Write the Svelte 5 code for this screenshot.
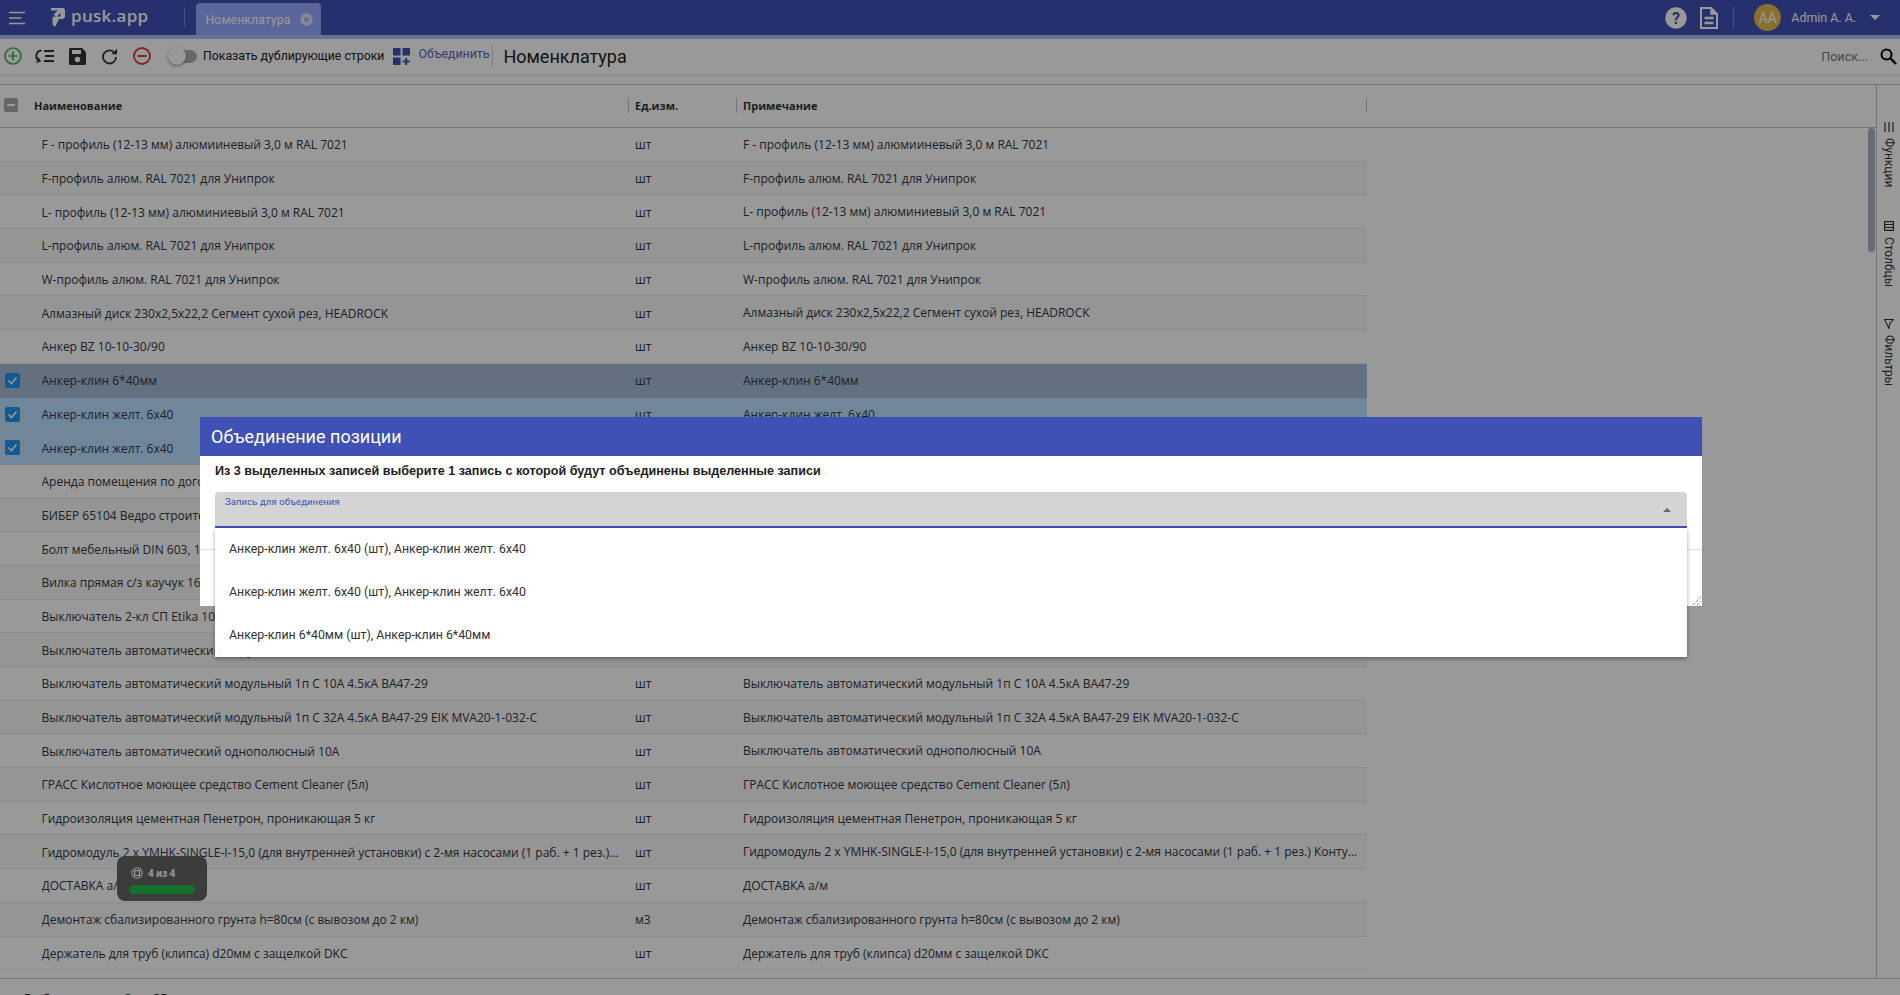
<script>
  const rows = [
    ['F - профиль (12-13 мм) алюмииневый 3,0 м RAL 7021', 'шт'],
    ['F-профиль алюм. RAL 7021 для Унипрок', 'шт'],
    ['L- профиль (12-13 мм) алюминиевый 3,0 м RAL 7021', 'шт'],
    ['L-профиль алюм. RAL 7021 для Унипрок', 'шт'],
    ['W-профиль алюм. RAL 7021 для Унипрок', 'шт'],
    ['Алмазный диск 230х2,5х22,2 Сегмент сухой рез, HEADROCK', 'шт'],
    ['Анкер BZ 10-10-30/90', 'шт'],
    ['Анкер-клин 6*40мм', 'шт', 'focus'],
    ['Анкер-клин желт. 6х40', 'шт', 'sel'],
    ['Анкер-клин желт. 6х40', 'шт', 'sel'],
    ['Аренда помещения по договору', 'шт'],
    ['БИБЕР 65104 Ведро строительное', 'шт'],
    ['Болт мебельный DIN 603, 10х100', 'шт'],
    ['Вилка прямая с/з каучук 16А', 'шт'],
    ['Выключатель 2-кл СП Etika 10А', 'шт'],
    ['Выключатель автоматический модульный 1п С 6А', 'шт'],
    ['Выключатель автоматический модульный 1п С 10А 4.5кА ВА47-29', 'шт'],
    ['Выключатель автоматический модульный 1п С 32А 4.5кА ВА47-29 EIK MVA20-1-032-С', 'шт'],
    ['Выключатель автоматический однополюсный 10А', 'шт'],
    ['ГРАСС Кислотное моющее средство Cement Cleaner (5л)', 'шт'],
    ['Гидроизоляция цементная Пенетрон, проникающая 5 кг', 'шт'],
    ['Гидромодуль 2 х YMHK-SINGLE-I-15,0 (для внутренней установки) с 2-мя насосами (1 раб. + 1 рез.) Контур охлаждения', 'шт'],
    ['ДОСТАВКА а/м', 'шт'],
    ['Демонтаж сбализированного грунта h=80см (с вывозом до 2 км)', 'м3'],
    ['Держатель для труб (клипса) d20мм с защелкой DKC', 'шт']
  ];
  const options = [
    'Анкер-клин желт. 6х40 (шт), Анкер-клин желт. 6х40',
    'Анкер-клин желт. 6х40 (шт), Анкер-клин желт. 6х40',
    'Анкер-клин 6*40мм (шт), Анкер-клин 6*40мм'
  ];
</script>

<div class="page">
  <header class="topbar">
    <div class="left">
      <svg class="burger" width="16" height="14" viewBox="0 0 16 14"><path d="M0 1.500h16M0 7h12.500M0 12.500h16" stroke="#fff" stroke-width="1.600" fill="none"/></svg>
      <div class="logo">
        <svg width="14" height="20" viewBox="0 0 14 20"><path d="M0 1h12.500l1.500 1.500V10l-2 2H8L4.500 19 3 19.500 1.500 17V10.500L3 9.500h6.500V5.800L5.500 10 2.500 7.500 7 3.500H0z" fill="#fff"/></svg>
        <span>pusk.app</span>
      </div>
      <div class="vline"></div>
      <div class="tab">
        <span>Номенклатура</span>
        <svg width="13" height="13" viewBox="0 0 13 13"><circle cx="6.500" cy="6.500" r="6.200" fill="#dfe4ff"/><path d="M4.500 4.500l4 4M8.500 4.500l-4 4" stroke="#8f9fe8" stroke-width="1.100"/></svg>
      </div>
    </div>
    <div class="right">
      <svg width="22" height="22" viewBox="0 0 22 22"><circle cx="11" cy="11" r="10.700" fill="#fff"/><text x="11" y="16.500" text-anchor="middle" class="q">?</text></svg>
      <svg class="doc" width="18" height="22" viewBox="0 0 18 22"><path d="M1 1h10l6 6v14H1z" fill="none" stroke="#fff" stroke-width="2"/><path d="M11 1v6h6" fill="#fff" stroke="#fff" stroke-width="1.500"/><path d="M4.500 11h9M4.500 16h9" stroke="#fff" stroke-width="2.600"/></svg>
      <div class="vline r"></div>
      <div class="avatar">AA</div>
      <span class="uname">Admin A. A.</span>
      <svg class="caret" width="10" height="5" viewBox="0 0 10 5"><path d="M0 0h10L5 5z" fill="#fff"/></svg>
    </div>
  </header>

  <div class="toolbar">
    <svg class="i1" width="18" height="18" viewBox="0 0 18 18"><circle cx="9" cy="9" r="8" fill="none" stroke="#43b853" stroke-width="1.700"/><path d="M9 4.500v9M4.500 9h9" stroke="#43b853" stroke-width="1.700"/></svg>
    <svg class="i2" width="19" height="14" viewBox="0 0 19 14"><path d="M6.500 1.500A5.500 5.500 0 0 0 4.500 12" fill="none" stroke="#333" stroke-width="1.800"/><path d="M2.500 8.500l2.500 3.500-3.500 1.500" fill="none" stroke="#333" stroke-width="1.400"/><path d="M9 2h10M10 7h9M9 12h10" stroke="#333" stroke-width="1.800"/></svg>
    <svg class="i3" width="17" height="17" viewBox="0 0 17 17"><path d="M0 1.500A1.500 1.500 0 0 1 1.500 0H13l4 4v11.500a1.500 1.500 0 0 1-1.500 1.500h-14A1.500 1.500 0 0 1 0 15.500z" fill="#333"/><rect x="3" y="2" width="9" height="4" fill="#ffffff"/><circle cx="8.500" cy="11.500" r="2.700" fill="#fff"/></svg>
    <svg class="i4" width="17" height="17" viewBox="0 0 17 17"><path d="M13.500 4.800A6.500 6.500 0 1 0 15 9" fill="none" stroke="#333" stroke-width="1.800"/><path d="M10.500 6.300H16V.8z" fill="#333"/></svg>
    <svg class="i5" width="18" height="18" viewBox="0 0 18 18"><circle cx="9" cy="9" r="8" fill="none" stroke="#e53535" stroke-width="1.800"/><path d="M4.500 9h9" stroke="#e53535" stroke-width="2"/></svg>
    <div class="toggle"><div class="thumb"></div></div>
    <span class="tlabel">Показать дублирующие строки</span>
    <svg class="i6" width="17" height="17" viewBox="0 0 17 17"><path d="M0 0h7.500v7.500H0zM9.500 0H17v7.500H9.500zM0 9.500h7.500V17H0z" fill="#3f51b5"/><path d="M13.200 10v7M9.700 13.500h7" stroke="#3f51b5" stroke-width="2"/></svg>
    <span class="merge">Объединить</span>
    <div class="tsep"></div>
    <span class="title">Номенклатура</span>
    <span class="search">Поиск...</span>
    <svg class="i7" width="17" height="17" viewBox="0 0 17 17"><circle cx="6.500" cy="6.500" r="5" fill="none" stroke="#000" stroke-width="2"/><path d="M10.200 10.200L16 16" stroke="#000" stroke-width="2.400"/></svg>
  </div>

  <div class="grid">
    <div class="main">
      <div class="ghead">
        <div class="c1h">
          <span class="hcheck"><i></i></span>
          <b>Наименование</b>
        </div>
        <div class="c2h"><b>Ед.изм.</b></div>
        <div class="c3h"><b>Примечание</b></div>
      </div>
      <div class="gbody">
        <div class="rows">
          {#each rows as r, i}
            <div class="row" class:alt={i % 2 === 1} class:focus={r[2] === 'focus'} class:sel={r[2] === 'sel'}>
              <div class="cell c1">
                {#if r[2]}
                  <svg class="rcheck" width="15" height="15" viewBox="0 0 15 15"><rect width="15" height="15" rx="2" fill="#2196f3"/><path d="M3.500 7.500l3 3 5-6" fill="none" stroke="#fff" stroke-width="1.600"/></svg>
                {/if}
                <span>{r[0]}</span>
              </div>
              <div class="cell c2">{r[1]}</div>
              <div class="cell c3">{r[0]}</div>
            </div>
          {/each}
        </div>
        <div class="thumbbar"></div>
      </div>
    </div>
    <aside class="side">
      <div class="stab s1">
        <svg width="10" height="10" viewBox="0 0 10 10"><path d="M0 1h10M0 5h10M0 9h10" stroke="#333" stroke-width="1.200" transform="rotate(90 5 5)"/></svg>
        <span>Функции</span>
      </div>
      <div class="stab s2">
        <svg width="10" height="10" viewBox="0 0 10 10"><rect x=".6" y=".6" width="8.800" height="8.800" fill="none" stroke="#333" stroke-width="1.200"/><path d="M.6 3.500h8.800M.6 6.500h8.800" stroke="#333" stroke-width="1.200"/></svg>
        <span>Столбцы</span>
      </div>
      <div class="stab s3">
        <svg width="10" height="10" viewBox="0 0 10 10"><path d="M.5.5h9L5.800 4.500 5 9.500z" fill="none" stroke="#333" stroke-width="1.100"/></svg>
        <span>Фильтры</span>
      </div>
    </aside>
  </div>

  <footer class="status"><b>Выбрано строк: 3 из 25</b></footer>

  <div class="toast">
    <div class="tline">
      <svg width="12" height="12" viewBox="0 0 12 12"><circle cx="6" cy="6" r="5" fill="none" stroke="#fff" stroke-width="1.600" stroke-dasharray="1.400 .6"/><rect x="3.600" y="3.600" width="4.800" height="4.800" fill="none" stroke="#fff" stroke-width="1.200"/></svg>
      <span>4 из 4</span>
    </div>
    <div class="bar"></div>
  </div>

  <div class="overlay"></div>

  <div class="dialog">
    <div class="dhead">Объединение позиции</div>
    <div class="dbody">
      <p class="lead">Из 3 выделенных записей выберите 1 запись с которой будут объединены выделенные записи</p>
      <div class="field">
        <label for="merge-select">Запись для объединения</label>
        <svg class="up" width="8" height="4" viewBox="0 0 8 4"><path d="M0 4h8L4 0z" fill="#666"/></svg>
        <div class="menu" id="merge-select">
          {#each options as o}
            <div class="opt">{o}</div>
          {/each}
        </div>
      </div>
    </div>
    <div class="dfoot"></div>
    <svg class="grip" width="8" height="8" viewBox="0 0 8 8"><path d="M0 8l8-8M4 8l4-4" stroke="#555" stroke-width="1" stroke-dasharray="1 1" fill="none"/></svg>
  </div>
</div>

<style>
  :global(body) { margin: 0; background: #fff; }
  .page {
    position: relative;
    width: 1900px;
    height: 995px;
    overflow: hidden;
    display: flex;
    flex-direction: column;
    background: #fff;
    font-family: "Open Sans", "Noto Sans", sans-serif;
    color: #2f3640;
  }
  .topbar {
    height: 35px;
    flex: none;
    border-bottom: 4px solid #aabbff;
    background: #3f51b5;
    display: flex;
    justify-content: space-between;
    align-items: stretch;
    font-family: Roboto, sans-serif;
    color: #fff;
  }
  .left, .right { display: flex; align-items: center; }
  .burger { margin-left: 9px; }
  .logo { display: flex; align-items: center; margin-left: 26px; gap: 6px; }
  .logo span { font-family: "Open Sans", sans-serif; font-weight: 600; font-size: 17px; letter-spacing: .3px; margin-top: -4px; }
  .logo svg { margin-top: -1px; }
  .vline { width: 1px; height: 20px; background: #7a88d0; margin-left: 36px; margin-top: -2px; }
  .tab {
    align-self: flex-end;
    margin-left: 11px;
    width: 125px;
    height: 32px;
    box-sizing: border-box;
    background: #96a8ff;
    border-radius: 4px 4px 0 0;
    display: flex;
    align-items: center;
    padding: 0 0 0 9px;
    gap: 10px;
    font-size: 12.400px;
  }
  .q { font: 700 16px Roboto, sans-serif; fill: #3f51b5; }
  .doc { margin-left: 13px; }
  .vline.r { margin: 0 0 0 15px; height: 22px; }
  .avatar {
    width: 27px; height: 27px; border-radius: 50%;
    background: #e6bb4c;
    margin-left: 20px;
    display: flex; align-items: center; justify-content: center;
    font-size: 14px;
  }
  .uname { margin-left: 10px; font-size: 12.400px; }
  .caret { margin: 0 20px 0 14px; }

  .toolbar {
    height: 36px;
    flex: none;
    border-bottom: 1px solid #e4e4e4;
    margin-bottom: 8px;
    display: flex;
    align-items: center;
    font-family: Roboto, sans-serif;
    color: #222;
  }
  .toolbar > * { position: relative; top: -1px; }
  .i1 { margin-left: 4px; }
  .i2 { margin-left: 13px; }
  .i3 { margin-left: 15px; }
  .i4 { margin-left: 15px; }
  .i5 { margin-left: 15px; }
  .toggle { width: 28px; height: 13px; margin-left: 18px; background: #b0b0b0; border-radius: 7px; }
  .thumb { position: absolute; left: -1px; top: -2.500px; width: 18px; height: 18px; background: #fff; border-radius: 50%; box-shadow: 0 1px 3px rgba(0,0,0,.45); }
  .tlabel { margin-left: 6px; font-size: 12.300px; }
  .i6 { margin-left: 9px; }
  .merge { margin-left: 8px; font-size: 12.350px; color: #5566c0; top: -3px; }
  .tsep { width: 1px; height: 22px; background: #d4d4d4; margin-left: 3px; }
  .title { margin-left: 10px; font-size: 18px; color: #222; }
  .search { margin-left: auto; font-size: 12.600px; color: #777; }
  .i7 { margin: 0 3px 0 12px; }

  .grid {
    height: 895px;
    flex: none;
    border-top: 1px solid #c4c2ca;
    border-bottom: 1px solid #c4c2ca;
    box-sizing: border-box;
    display: flex;
  }
  .main { width: 1876px; flex: none; display: flex; flex-direction: column; }
  .side { flex: 1; border-left: 1px solid #c4c2ca; display: flex; flex-direction: column; padding-top: 37px; }
  .ghead {
    height: 42px;
    flex: none;
    border-bottom: 1px solid #c4c2ca;
    display: grid;
    grid-template-columns: 628px 108px 631px;
    width: 100%;
    font-size: 11px;
    color: #333;
  }
  .ghead > div { display: flex; align-items: center; position: relative; top: -1px; }
  .ghead b { font-weight: 700; }
  .c1h { padding-left: 4px; }
  .c1h b { margin-left: 16px; }
  .c2h, .c3h { padding-left: 7px; }
  .c2h::before, .c3h::before, .c3h::after {
    content: ""; position: absolute; left: 0; top: 14px; height: 15px; width: 1px; background: #c4c2ca;
  }
  .c3h::after { left: auto; right: 0; }
  .c3h { width: 631px; box-sizing: border-box; }
  .hcheck { width: 14px; height: 14px; border-radius: 2px; background: #aaa; display: flex; align-items: center; justify-content: center; }
  .hcheck i { width: 8px; height: 2px; background: #fff; display: block; }

  .gbody { flex: 1; display: flex; justify-content: space-between; align-items: flex-start; min-height: 0; }
  .rows { width: 1367px; flex: none; }
  .row {
    height: 33.700px;
    box-sizing: border-box;
    border-bottom: 1px solid #e8e8e8;
    display: grid;
    grid-template-columns: 628px 108px 631px;
    font-size: 12px;
  }
  .row.alt { background: #f8f8f8; }
  .row.focus { background: #a5bbd4; border-bottom-color: #a5bbd4; }
  .row.sel { background: #bbe0ff; border-bottom-color: #c8dff0; }
  .cell { display: flex; align-items: center; min-width: 0; white-space: nowrap; padding-top: 1px; box-sizing: border-box; }
  .c1 { padding-left: 41.500px; padding-right: 8px; position: relative; }
  .c1 span { overflow: hidden; text-overflow: ellipsis; display: block; }
  .c2 { padding-left: 7px; }
  .c3 { padding: 0 6px 0 7px; display: block; line-height: 33.700px; overflow: hidden; text-overflow: ellipsis; }
  .rcheck { position: absolute; left: 5px; top: 9px; }
  .thumbbar { width: 7px; height: 124px; margin-right: 1px; background: #a9b4c4; border-radius: 4px; }

  .stab { display: flex; flex-direction: column; align-items: center; font-size: 12px; color: #333; }
  .stab span { writing-mode: vertical-rl; margin-top: 6px; line-height: 1; font-family: Roboto, sans-serif; }
  .s2 { margin-top: 34px; }
  .s3 { margin-top: 32px; }

  .status { padding: 0 0 0 24px; margin-top: -3px; height: 20px; font-size: 12px; position: relative; top: 14px; color: #333; }

  .toast {
    position: absolute; left: 117px; top: 856px;
    width: 90px; height: 45px;
    box-sizing: border-box;
    border-radius: 8px;
    background: #656565;
    padding: 10px 12px 0;
  }
  .tline { display: flex; align-items: center; gap: 5px; height: 14px; font: 700 10px Roboto, sans-serif; color: #fff; }
  .tline svg { margin-left: 2px; }
  .bar { height: 9px; margin-top: 5px; border-radius: 5px; background: #25be46; width: 66px; }

  .overlay { position: absolute; inset: 0; background: rgba(0, 0, 0, .4); }

  .dialog {
    position: absolute; left: 200px; top: 417px;
    width: 1502px; height: 189px;
    background: #fff;
    display: flex; flex-direction: column;
    font-family: Roboto, sans-serif;
  }
  .dhead {
    height: 39px; flex: none;
    background: #3f51b5; color: #fff;
    display: flex; align-items: center;
    padding-left: 11px;
    font-size: 18px; font-weight: 400;
  }
  .dbody { padding: 7px 15px 0; }
  .lead { margin: 0; font-size: 12.600px; font-weight: 700; line-height: 16px; color: #222; font-family: "Liberation Sans", Arial, sans-serif; }
  .field {
    position: relative;
    margin-top: 13px;
    height: 36px;
    box-sizing: border-box;
    background: #d4d4d4;
    border-bottom: 2px solid #3f51b5;
    border-radius: 4px 4px 0 0;
    z-index: 2;
  }
  .field label { position: absolute; left: 10px; top: 4px; font-size: 9.500px; color: #3f51b5; letter-spacing: .1px; }
  .up { position: absolute; right: 16px; top: 16px; }
  .menu {
    position: absolute; left: 0; right: 0; top: 36px;
    background: #fff;
    box-shadow: 0 2px 4px rgba(0,0,0,.35);
    height: 129px;
  }
  .opt { height: 43px; display: flex; align-items: center; padding: 0 0 2px 14px; box-sizing: border-box; font-size: 12.350px; color: #333; }
  .dfoot { margin-top: 21px; border-top: 1px solid #e0e0e0; flex: 1; }
  .grip { position: absolute; right: 1px; bottom: 1px; }
</style>
